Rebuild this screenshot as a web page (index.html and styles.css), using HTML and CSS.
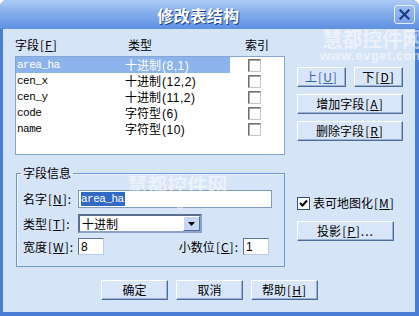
FILE: index.html
```html
<!DOCTYPE html>
<html lang="zh-CN">
<head>
<meta charset="utf-8">
<title>修改表结构</title>
<link rel="stylesheet" href="styles.css">
</head>
<body>
<div class="window">
  <div class="titlebar">
    <h1 class="title">修改表结构</h1>
    <button class="close" type="button" aria-label="关闭">
      <svg width="11" height="11" viewBox="0 0 11 11"><path d="M1.5 1.5 L9.5 9.5 M9.5 1.5 L1.5 9.5" stroke="#1c3b86" stroke-width="2.2" stroke-linecap="square"/></svg>
    </button>
  </div>
  <div class="client">
    <div class="main">
      <div class="left">
        <div class="list-head">
          <span class="h-name">字段<span class="k">[<u>F</u>]</span></span>
          <span class="h-type">类型</span>
          <span class="h-idx">索引</span>
        </div>
        <div class="list">
          <div class="row sel"><div class="cells"><span class="c-name mono">area_ha</span><span class="c-type">十进制<span class="num">(8,1)</span></span></div><span class="cb"></span></div>
          <div class="row"><div class="cells"><span class="c-name mono">cen_x</span><span class="c-type">十进制<span class="num">(12,2)</span></span></div><span class="cb"></span></div>
          <div class="row"><div class="cells"><span class="c-name mono">cen_y</span><span class="c-type">十进制<span class="num">(11,2)</span></span></div><span class="cb"></span></div>
          <div class="row"><div class="cells"><span class="c-name mono">code</span><span class="c-type">字符型<span class="num">(6)</span></span></div><span class="cb"></span></div>
          <div class="row"><div class="cells"><span class="c-name mono">name</span><span class="c-type">字符型<span class="num">(10)</span></span></div><span class="cb"></span></div>
        </div>
        <fieldset class="group">
          <legend>字段信息</legend>
          <div class="frow r-name">
            <label class="flabel">名字<span class="k">[<u>N</u>]:</span></label>
            <div class="input name-input"><span class="mono selected">area_ha</span></div>
          </div>
          <div class="frow r-type">
            <label class="flabel">类型<span class="k">[<u>T</u>]:</span></label>
            <div class="select">
              <span class="select-text">十进制</span>
              <span class="drop">
                <svg width="7" height="4" viewBox="0 0 7 4"><path d="M0 0 H7 L3.5 4 Z" fill="#000"/></svg>
              </span>
            </div>
          </div>
          <div class="frow r-width">
            <label class="flabel">宽度<span class="k">[<u>W</u>]:</span></label>
            <div class="input small-input"><span class="num">8</span></div>
            <label class="dlabel">小数位<span class="k">[<u>C</u>]:</span></label>
            <div class="input small-input dec-input"><span class="num">1</span></div>
          </div>
        </fieldset>
      </div>
      <div class="right">
        <div class="btnrow">
          <button class="btn half hot" type="button">上<span class="k">[<u>U</u>]</span></button>
          <button class="btn half" type="button">下<span class="k">[<u>D</u>]</span></button>
        </div>
        <button class="btn wide" type="button">增加字段<span class="k">[<u>A</u>]</span></button>
        <button class="btn wide" type="button">删除字段<span class="k">[<u>R</u>]</span></button>
        <div class="check-row">
          <span class="cb checked">
            <svg width="9" height="9" viewBox="0 0 9 9"><path d="M1 4 L3.5 6.5 L8 1.5" fill="none" stroke="#000" stroke-width="2"/></svg>
          </span>
          <span class="check-label">表可地图化<span class="k">[<u>M</u>]</span></span>
        </div>
        <button class="btn proj" type="button">投影<span class="k">[<u>P</u>]...</span></button>
      </div>
    </div>
    <div class="actions">
      <button class="btn act" type="button">确定</button>
      <button class="btn act" type="button">取消</button>
      <button class="btn act" type="button">帮助<span class="k">[<u>H</u>]</span></button>
    </div>
  </div>
  <div class="wm wm1"><span class="wm-cn">慧都控件网</span><span class="wm-en">www.evget.com</span></div>
  <div class="wm wm2"><span class="wm-cn">慧都控件网</span><span class="wm-en">www.evget.com</span></div>
</div>
</body>
</html>
```

FILE: styles.css
```css
* { box-sizing: border-box; }

html, body {
  margin: 0;
  padding: 0;
}

body {
  width: 419px;
  height: 316px;
  overflow: hidden;
  background: #ffffff;
  font-family: "Noto Sans CJK SC", "Liberation Sans", sans-serif;
  font-size: 12px;
  line-height: 14px;
  color: #000;
}

.window {
  position: relative;
  width: 419px;
  height: 316px;
  display: flex;
  flex-direction: column;
  background: #4a7dd6;
  border-radius: 7px 7px 0 0;
  overflow: hidden;
}

/* ---------- title bar ---------- */
.titlebar {
  height: 29px;
  flex: none;
  display: flex;
  align-items: center;
  background: linear-gradient(#aecbf6 0%, #8cb3ee 35%, #6f9de6 75%, #5f90e2 100%);
}

.title {
  flex: 1;
  margin: 0;
  padding-left: 3px;
  text-align: center;
  font-size: 16px;
  line-height: 20px;
  font-weight: bold;
  color: #ffffff;
  letter-spacing: 0.5px;
  text-shadow: 1px 1px 0 #1e3f8f;
}

.close {
  flex: none;
  width: 21px;
  height: 19px;
  margin-right: 4px;
  padding: 0;
  border: 1px solid #e4edfb;
  border-radius: 3px;
  background: linear-gradient(#9dbdf0, #7ba4e8);
  display: flex;
  align-items: center;
  justify-content: center;
}

/* ---------- client area ---------- */
.client {
  flex: 1;
  margin: 0 4px 4px 3px;
  background: #d6e4f8;
  display: flex;
  flex-direction: column;
  padding: 9px 0 0 12px;
}

.main {
  display: flex;
  gap: 12px;
}

.left {
  width: 270px;
  display: flex;
  flex-direction: column;
}

.list-head {
  display: flex;
  height: 14px;
  margin-bottom: 4px;
}

.h-name { width: 113px; }
.h-type { width: 117px; }

.k {
  letter-spacing: 1px;
  margin-left: 1px;
}

.list {
  height: 99px;
  border: 1px solid #88a6d4;
  background: #ffffff;
}

.row {
  display: flex;
  align-items: center;
  height: 16px;
}

.cells {
  width: 214px;
  height: 16px;
  display: flex;
  align-items: center;
  padding-left: 1px;
}

.row.sel .cells {
  background: #8db3ec;
  color: #ffffff;
}

.c-name { width: 108px; }

.row .cb { margin-left: 18px; }

.mono {
  font-family: "Liberation Mono", "DejaVu Sans Mono", monospace;
  font-size: 11px;
  letter-spacing: -0.5px;
}

.num {
  font-family: "Liberation Sans", sans-serif;
  font-size: 12px;
  letter-spacing: 0.5px;
  margin-left: 1px;
}

.cb {
  width: 13px;
  height: 13px;
  flex: none;
  background: #ffffff;
  border: 1px solid;
  border-color: #707070 #c6c6c6 #c6c6c6 #707070;
  box-shadow: inset 1px 1px 0 #a8a8a8;
  display: flex;
  align-items: center;
  justify-content: center;
}

/* ---------- group box ---------- */
.group {
  margin: 10px 0 0 1px;
  width: 269px;
  height: 102px;
  padding: 0 12px 0 4px;
  border: 1px solid #6f97d8;
  box-shadow: inset 1px 1px 0 #eef4fd;
}

.group legend {
  padding: 0 2px;
  line-height: 16px;
  font-size: 12px;
}

.frow {
  display: flex;
  align-items: center;
  padding-left: 2px;
}

.r-name { height: 18px; margin-top: 9px; }
.r-type { height: 19px; margin-top: 6px; }
.r-width { height: 17px; margin-top: 5px; }

.flabel { width: 55px; flex: none; }

.input {
  height: 100%;
  background: #ffffff;
  border: 1px solid #7f9db9;
  display: flex;
  align-items: center;
  padding-left: 2px;
}

.input .num { margin-left: 0; }

.name-input { width: 194px; }

.selected {
  background: #3169c6;
  color: #ffffff;
  line-height: 14px;
  padding-right: 1px;
}

.small-input { width: 26px; border-color: #5d7494 #b9cbe6 #b9cbe6 #5d7494; }

.dlabel { margin-left: auto; margin-right: 4px; }

.dec-input { margin-right: 3px; }

.select {
  width: 124px;
  height: 19px;
  background: #ffffff;
  border: 2px solid;
  border-color: #5c6f8f #8ea4c6 #8ea4c6 #5c6f8f;
  display: flex;
  align-items: center;
  padding-left: 2px;
}

.select-text { flex: 1; }

.drop {
  width: 17px;
  height: 15px;
  background: #c6d8f3;
  border: 1px solid;
  border-color: #ffffff #56709c #56709c #ffffff;
  display: flex;
  align-items: center;
  justify-content: center;
}

/* ---------- right column ---------- */
.right {
  width: 106px;
  display: flex;
  flex-direction: column;
  padding-top: 29px;
}

.btnrow {
  display: flex;
  gap: 8px;
}

.btn {
  height: 20px;
  padding: 0;
  font-family: "Noto Sans CJK SC", "Liberation Sans", sans-serif;
  font-size: 12px;
  line-height: 14px;
  color: #000;
  background: #d9e6f9;
  border: 1px solid;
  border-color: #ffffff #4f6b9c #4f6b9c #ffffff;
  box-shadow: inset -1px -1px 0 #99b2d8;
  display: flex;
  align-items: center;
  justify-content: center;
}

.btn.half { width: 49px; }
.btn.hot { color: #3763ad; }

.btn.wide { width: 106px; margin-top: 7px; }

.check-row {
  display: flex;
  align-items: center;
  gap: 3px;
  height: 14px;
  margin-top: 55px;
}

.cb.checked {
  border-color: #2c4f8a;
  box-shadow: none;
}

.btn.proj { width: 97px; margin-top: 11px; }

/* ---------- bottom buttons ---------- */
.actions {
  display: flex;
  justify-content: center;
  gap: 8px;
  margin-top: 13px;
  padding-right: 11px;
}

.btn.act { width: 67px; }

/* ---------- watermark overlay ---------- */
.wm {
  position: absolute;
  display: flex;
  flex-direction: column;
  align-items: center;
  color: rgba(255, 255, 255, 0.55);
  pointer-events: none;
  font-weight: bold;
}

.wm-cn {
  font-size: 20px;
  line-height: 22px;
}

.wm-en {
  font-family: "Liberation Sans", sans-serif;
  font-size: 13px;
  line-height: 12px;
  letter-spacing: 0.5px;
}

.wm1 { left: 320px; top: 28px; }
.wm2 { left: 125px; top: 174px; }
```
